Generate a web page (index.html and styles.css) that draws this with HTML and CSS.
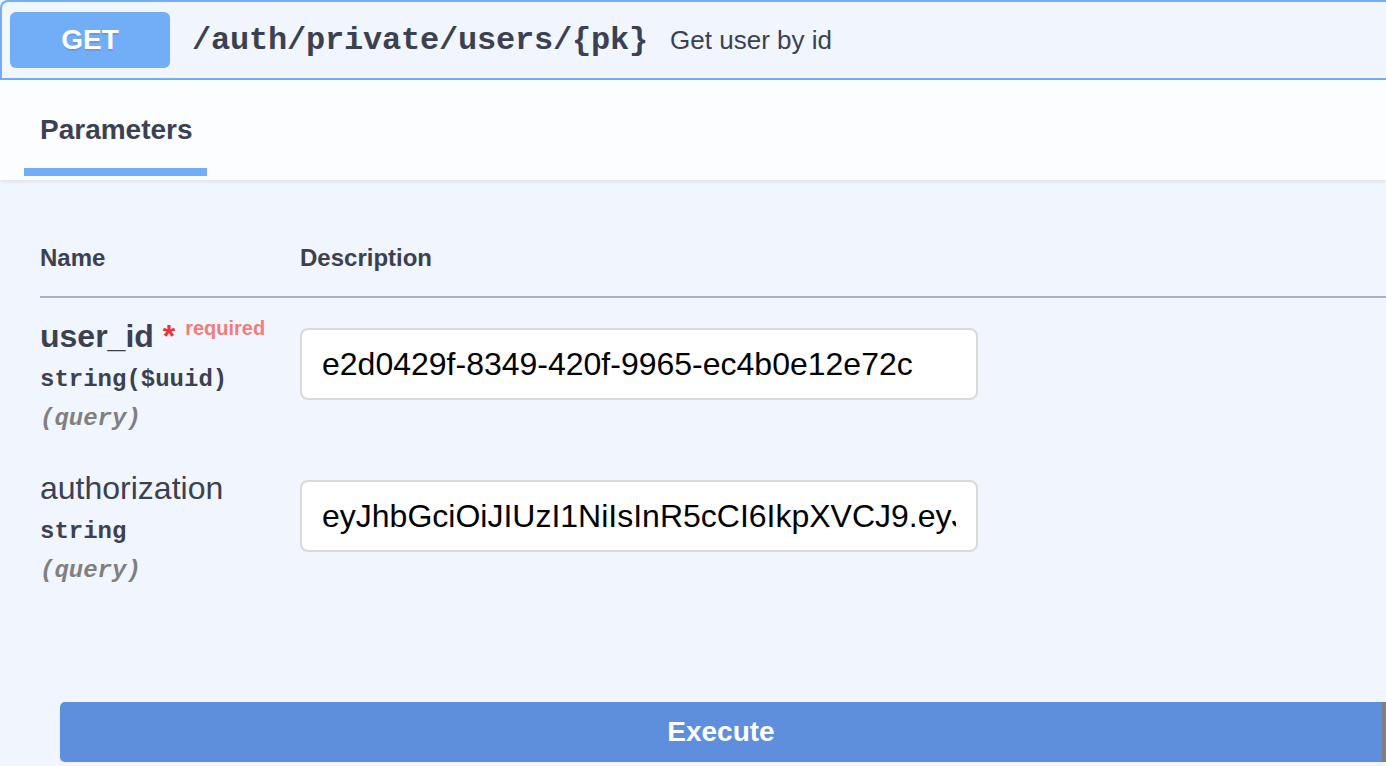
FILE: index.html
```html
<!DOCTYPE html>
<html lang="en">
<head>
<meta charset="utf-8">
<title>GET /auth/private/users/{pk}</title>
<link rel="stylesheet" href="styles.css">
</head>
<body>
<div class="opblock">
  <div class="summary">
    <span class="method">GET</span>
    <span class="path">/auth/private/users/{pk}</span>
    <span class="desc">Get user by id</span>
  </div>
  <div class="tabs">
    <div class="tab">
      <h4 class="tab-title">Parameters</h4>
      <span class="tab-underline"></span>
    </div>
  </div>
  <div class="params">
    <div class="thead">
      <div class="col-name">Name</div>
      <div class="col-desc">Description</div>
    </div>
    <div class="row">
      <div class="col-name">
        <div class="pname required">user_id<span class="star">&nbsp;*</span><span class="req">required</span></div>
        <div class="ptype">string($uuid)</div>
        <div class="pin">(query)</div>
      </div>
      <div class="col-desc">
        <input class="field" type="text" value="e2d0429f-8349-420f-9965-ec4b0e12e72c">
      </div>
    </div>
    <div class="row">
      <div class="col-name">
        <div class="pname">authorization</div>
        <div class="ptype">string</div>
        <div class="pin">(query)</div>
      </div>
      <div class="col-desc">
        <input class="field" type="text" value="eyJhbGciOiJIUzI1NiIsInR5cCI6IkpXVCJ9.eyJzdWIiOiJlMmQwNDI5ZiIsImV4cCI6MTcwMDAwMDAwMH0.sig">
      </div>
    </div>
  </div>
  <div class="execute-wrap">
    <button class="execute" type="button">Execute</button>
    <span class="edge"></span>
  </div>
</div>
</body>
</html>
```
FILE: styles.css
```css
html, body {
  margin: 0;
  padding: 0;
}
body {
  background: #f0f5fe;
  color: #3b4151;
  font-family: "Liberation Sans", Arial, sans-serif;
  overflow: hidden;
}
.opblock {
  width: 1386px;
}
.summary {
  display: flex;
  align-items: center;
  height: 76px;
  padding-left: 8px;
  background: #f0f5fe;
  border-top: 2px solid #74adf7;
  border-left: 2px solid #74adf7;
  border-bottom: 2px solid #74adf7;
  border-top-left-radius: 8px;
}
.method {
  display: flex;
  align-items: center;
  justify-content: center;
  width: 160px;
  height: 56px;
  border-radius: 6px;
  background: #72adf8;
  color: #fff;
  font-weight: bold;
  font-size: 28px;
  text-shadow: 0 2px 0 rgba(0, 0, 0, 0.1);
}
.path {
  margin-left: 22px;
  font-family: "Liberation Mono", "Courier New", monospace;
  font-weight: bold;
  font-size: 32px;
  letter-spacing: -0.2px;
  color: #3b4151;
}
.desc {
  margin-left: 22px;
  font-size: 26px;
  color: #3b4151;
}
.tabs {
  display: flex;
  height: 100px;
  padding-left: 24px;
  background: #fcfdff;
  box-shadow: 0 2px 4px rgba(0, 0, 0, 0.08);
  position: relative;
}
.tab {
  display: flex;
  flex-direction: column;
  width: 183px;
  padding-top: 34px;
}
.tab-title {
  margin: 0;
  padding-left: 16px;
  font-size: 28px;
  line-height: 32px;
  font-weight: bold;
  color: #3b4151;
}
.tab-underline {
  display: block;
  margin-top: 22px;
  height: 8px;
  background: #74adf7;
}
.params {
  padding-left: 40px;
}
.thead {
  display: flex;
  padding-top: 64px;
  padding-bottom: 24px;
  border-bottom: 2px solid #afb2bc;
  font-size: 24px;
  line-height: 28px;
  font-weight: bold;
}
.col-name {
  width: 260px;
  flex: none;
}
.col-desc {
  flex: 1;
}
.row {
  display: flex;
  height: 152px;
}
.pname {
  margin-top: 20px;
  font-size: 32px;
  line-height: 36px;
  height: 36px;
  color: #3b4151;
  white-space: nowrap;
}
.pname.required {
  font-weight: bold;
}
.star {
  color: #e9372f;
}
.req {
  position: relative;
  top: -12px;
  padding-left: 10px;
  font-size: 20px;
  line-height: 1;
  color: #f07d79;
}
.ptype {
  margin-top: 12px;
  font-family: "Liberation Mono", "Courier New", monospace;
  font-weight: bold;
  font-size: 24px;
  line-height: 28px;
  color: #3b4151;
}
.pin {
  margin-top: 11px;
  font-family: "Liberation Mono", "Courier New", monospace;
  font-weight: bold;
  font-style: italic;
  font-size: 24px;
  line-height: 28px;
  color: #808080;
}
.field {
  display: block;
  box-sizing: border-box;
  width: 678px;
  height: 72px;
  margin: 30px 0 0;
  padding: 0 20px;
  border: 2px solid #d9d9d9;
  border-radius: 8px;
  background: #fff;
  color: #000;
  font-family: "Liberation Sans", Arial, sans-serif;
  font-size: 32px;
  outline: none;
}
.execute-wrap {
  display: flex;
  margin-top: 100px;
  padding-left: 60px;
}
.execute {
  flex: 1;
  height: 60px;
  margin: 0;
  border: none;
  border-radius: 5px 0 0 5px;
  background: #5d8fdc;
  color: #fff;
  font-family: "Liberation Sans", Arial, sans-serif;
  font-weight: bold;
  font-size: 28px;
  box-shadow: 0 2px 3px rgba(0, 0, 0, 0.06);
}
.edge {
  width: 4px;
  height: 60px;
  background: #808080;
}
```
